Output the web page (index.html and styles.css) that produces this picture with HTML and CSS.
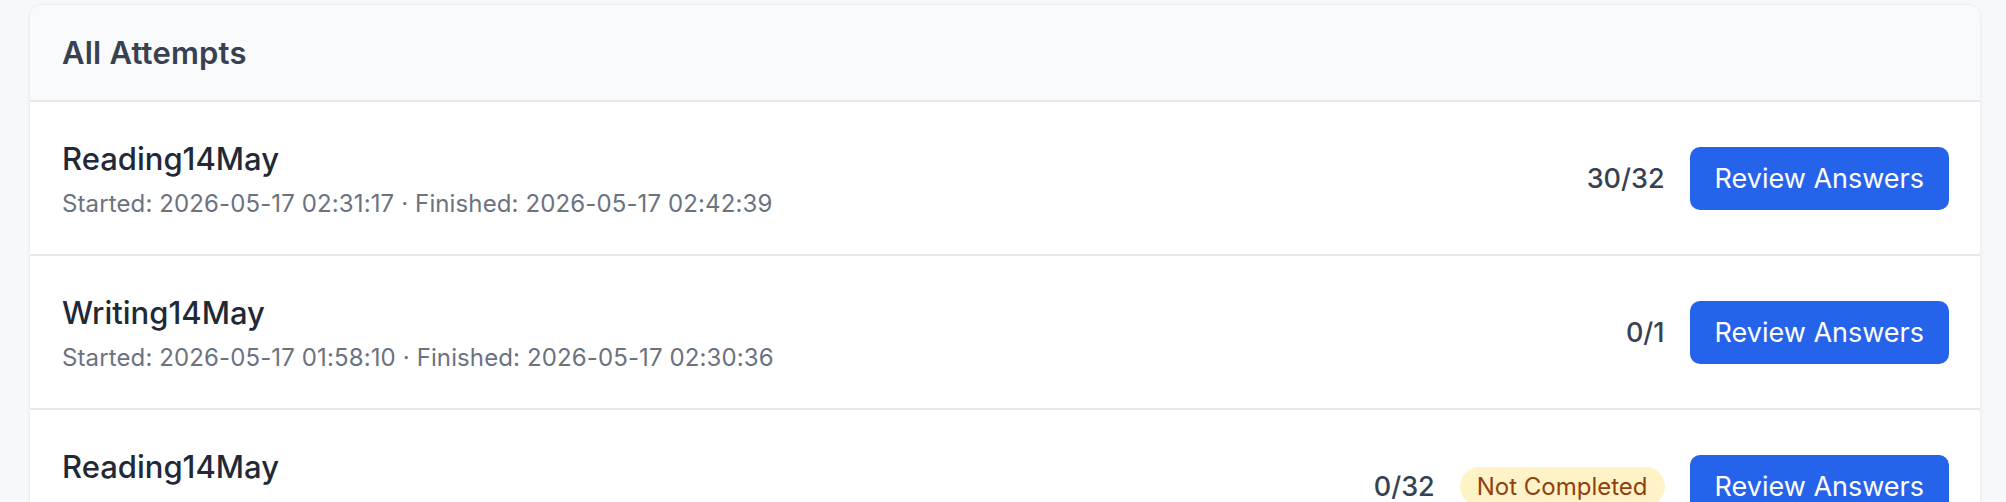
FILE: index.html
```html
<!DOCTYPE html>
<html lang="en">
<head>
    <meta charset="UTF-8">
    <meta name="viewport" content="width=device-width, initial-scale=1.0">
    <title>All Attempts</title>
    <link rel="stylesheet" href="styles.css">
</head>
<body>
    <div class="card">
        <div class="card-header">
            <h2>All Attempts</h2>
        </div>
        <ul class="attempts">
            <li class="attempt">
                <div class="attempt-info">
                    <div class="attempt-title">Reading14May</div>
                    <div class="attempt-meta">Started: 2026-05-17 02:31:17 · Finished: 2026-05-17 02:42:39</div>
                </div>
                <div class="attempt-actions">
                    <span class="score">30/32</span>
                    <a href="#" class="btn">Review Answers</a>
                </div>
            </li>
            <li class="attempt">
                <div class="attempt-info">
                    <div class="attempt-title">Writing14May</div>
                    <div class="attempt-meta">Started: 2026-05-17 01:58:10 · Finished: 2026-05-17 02:30:36</div>
                </div>
                <div class="attempt-actions">
                    <span class="score">0/1</span>
                    <a href="#" class="btn">Review Answers</a>
                </div>
            </li>
            <li class="attempt">
                <div class="attempt-info">
                    <div class="attempt-title">Reading14May</div>
                    <div class="attempt-meta">Started: 2026-05-17 01:20:44</div>
                </div>
                <div class="attempt-actions">
                    <span class="score">0/32</span>
                    <span class="badge">Not Completed</span>
                    <a href="#" class="btn">Review Answers</a>
                </div>
            </li>
        </ul>
    </div>
</body>
</html>
```

FILE: styles.css
```css
body {
    font-family: Inter, "Noto Sans", Arial, sans-serif;
    margin: 0;
    padding: 4px 25px 0 29px;
    background-color: #f7f8fa;
}
.card {
    background-color: white;
    border: 1px solid #eceef1;
    border-radius: 13px;
    box-shadow: 0 1px 4px rgba(0, 0, 0, 0.04);
    overflow: hidden;
}
.card-header {
    background-color: #f9fafb;
    padding: 24px 32px 23px;
    border-bottom: 2px solid #e5e7eb;
}
.card-header h2 {
    margin: 0;
    font-size: 31px;
    line-height: 48px;
    font-weight: 600;
    letter-spacing: 0.2px;
    color: #374151;
}
.attempts {
    list-style: none;
    margin: 0;
    padding: 0;
}
.attempt {
    display: flex;
    align-items: center;
    justify-content: space-between;
    padding: 33px 31px 33px 32px;
    border-bottom: 2px solid #e5e7eb;
}
.attempt-title {
    font-size: 31px;
    line-height: 48px;
    font-weight: 500;
    color: #1f2937;
}
.attempt-meta {
    margin-top: 4px;
    font-size: 24px;
    line-height: 34px;
    letter-spacing: 0.12px;
    color: #6b7280;
}
.attempt-actions {
    display: flex;
    align-items: center;
    gap: 25px;
}
.score {
    font-size: 27px;
    line-height: 41px;
    font-weight: 500;
    color: #374151;
}
.badge {
    font-size: 24px;
    line-height: 33px;
    padding: 3px 17px;
    border-radius: 999px;
    background-color: #fef3c7;
    color: #92400e;
}
.btn {
    display: inline-block;
    background-color: #2563eb;
    color: white;
    text-decoration: none;
    font-size: 27px;
    line-height: 41px;
    padding: 11px 25px;
    border-radius: 10px;
}
.btn:hover {
    background-color: #1d4ed8;
}
```
